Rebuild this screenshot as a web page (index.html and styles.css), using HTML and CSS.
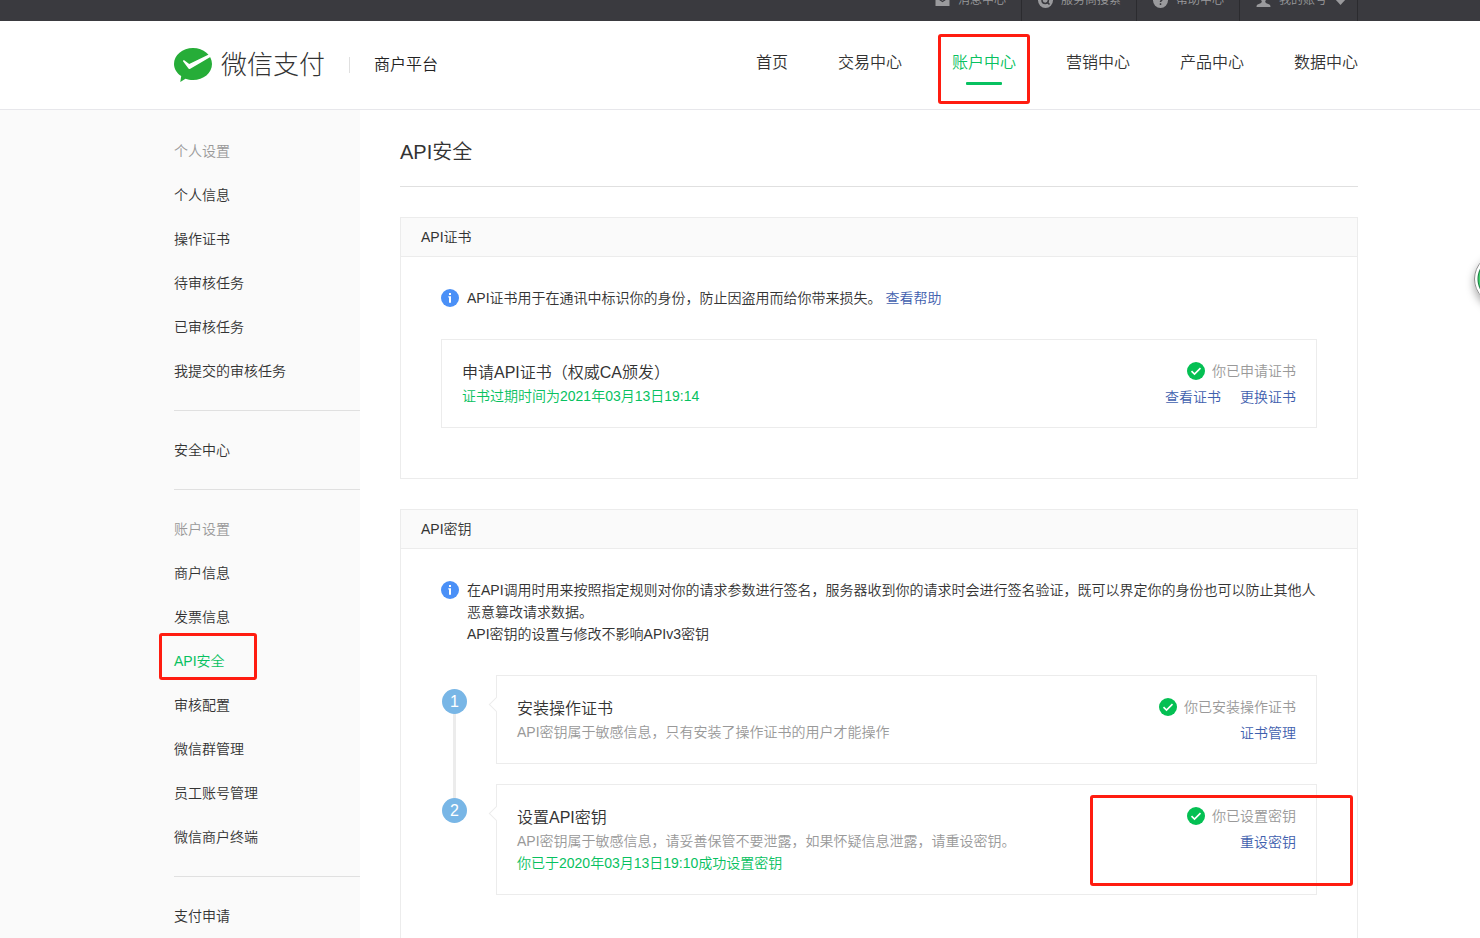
FILE: index.html
```html
<!DOCTYPE html>
<html lang="zh-CN">
<head>
<meta charset="utf-8">
<meta name="viewport" content="width=device-width, initial-scale=1">
<title>API安全 - 微信支付商户平台</title>
<link rel="stylesheet" href="styles.css">
</head>
<body>
<svg class="defs" aria-hidden="true">
  <symbol id="i-info" viewBox="0 0 18 18"><circle cx="9" cy="9" r="9" fill="#4a90f7"/><path d="M8 4h2v2H8zM7.300 7.200H10V13.800H8V8.400h-.7z" fill="#fff"/></symbol>
  <symbol id="i-ok" viewBox="0 0 18 18"><circle cx="9" cy="9" r="9" fill="#04c053"/><path d="M4.500 9.200l3 2.900 6-6" fill="none" stroke="#fff" stroke-width="1.600"/></symbol>
</svg>

<div class="topbar">
  <a class="top-item" href="#"><svg class="top-icon" viewBox="0 0 15 15"><path d="M.5 2h14v11H.5z" fill="#9a9a9d"/><path d="M3 5.500l4.500 3 4.500-3" fill="none" stroke="#3a3a3f" stroke-width="1.200"/></svg>消息中心</a>
  <a class="top-item" href="#"><svg class="top-icon" viewBox="0 0 15 15"><circle cx="7.500" cy="7.500" r="7.500" fill="#9a9a9d"/><circle cx="7.200" cy="7.200" r="3.200" fill="none" stroke="#3a3a3f" stroke-width="1.500"/><path d="M9 9l2.500 2.500" stroke="#3a3a3f" stroke-width="1.600"/></svg>服务商搜索</a>
  <a class="top-item" href="#"><svg class="top-icon" viewBox="0 0 15 15"><circle cx="7.500" cy="7.500" r="7.500" fill="#9a9a9d"/><path d="M5.300 5.600c.2-3 4.600-2.600 4.400.1-.1 1.400-2.200 1.500-2.200 3.400M7.500 10.300v1.700" fill="none" stroke="#3a3a3f" stroke-width="1.500"/></svg>帮助中心</a>
  <a class="top-item top-account" href="#"><svg class="top-icon" viewBox="0 0 15 15"><path d="M7.500 0a3.500 4 0 0 1 3.500 4c0 2-1 3.300-1.800 4 0 2 1.200 2.300 3 2.900 1.800.6 2.300 1.200 2.300 3.100H.5c0-1.900.5-2.500 2.300-3.100 1.800-.6 3-.9 3-2.900C5 7.300 4 6 4 4a3.500 4 0 0 1 3.500-4z" fill="#9a9a9d"/></svg>我的账号<svg class="top-caret" viewBox="0 0 11 6"><path d="M0 0h11L5.500 6z" fill="#9a9a9d"/></svg></a>
</div>

<header class="header">
  <a class="brand" href="#">
    <svg class="brand-icon" viewBox="0 0 38 34" aria-hidden="true"><path d="M19 0c10.500 0 19 7 19 16s-8.500 16-19 16c-2.700 0-5.200-.5-7.500-1.300L6.300 34l.9-5.900C2.800 25.200 0 20.900 0 16 0 7 8.500 0 19 0z" fill="#26ad38"/><path d="M10.200 12.300l5 3.800L35.300 6.200l1.900 2.300L16.300 20.700q-1.400.8-2.200-.7L9 13.200q-.2-1.500 1.200-.9z" fill="#fff"/></svg>
    <span class="brand-name">微信支付</span>
    <span class="brand-sub">商户平台</span>
  </a>
  <nav class="nav">
    <a href="#">首页</a>
    <a href="#">交易中心</a>
    <a class="active" href="#">账户中心<span class="mark mark-nav"></span></a>
    <a href="#">营销中心</a>
    <a href="#">产品中心</a>
    <a href="#">数据中心</a>
  </nav>
</header>

<div class="layout">
  <aside class="sidebar">
    <nav class="side-group">
      <h2>个人设置</h2>
      <a href="#">个人信息</a>
      <a href="#">操作证书</a>
      <a href="#">待审核任务</a>
      <a href="#">已审核任务</a>
      <a href="#">我提交的审核任务</a>
    </nav>
    <nav class="side-group">
      <a href="#">安全中心</a>
    </nav>
    <nav class="side-group">
      <h2>账户设置</h2>
      <a href="#">商户信息</a>
      <a href="#">发票信息</a>
      <a class="active" href="#">API安全<span class="mark mark-side"></span></a>
      <a href="#">审核配置</a>
      <a href="#">微信群管理</a>
      <a href="#">员工账号管理</a>
      <a href="#">微信商户终端</a>
    </nav>
    <nav class="side-group">
      <a href="#">支付申请</a>
    </nav>
  </aside>

  <main class="main">
    <h1>API安全</h1>

    <section class="panel">
      <h2 class="panel-head">API证书</h2>
      <div class="panel-body">
        <div class="info">
          <svg class="icon"><use href="#i-info"/></svg>
          <p>API证书用于在通讯中标识你的身份，防止因盗用而给你带来损失。 <a class="link" href="#">查看帮助</a></p>
        </div>
        <div class="card">
          <div class="card-text">
            <h3>申请API证书（权威CA颁发）</h3>
            <p class="green">证书过期时间为2021年03月13日19:14</p>
          </div>
          <div class="card-side">
            <p class="status"><svg class="icon"><use href="#i-ok"/></svg>你已申请证书</p>
            <div class="actions"><a class="link" href="#">查看证书</a><a class="link" href="#">更换证书</a></div>
          </div>
        </div>
      </div>
    </section>

    <section class="panel">
      <h2 class="panel-head">API密钥</h2>
      <div class="panel-body">
        <div class="info">
          <svg class="icon"><use href="#i-info"/></svg>
          <p>在API调用时用来按照指定规则对你的请求参数进行签名，服务器收到你的请求时会进行签名验证，既可以界定你的身份也可以防止其他人恶意篡改请求数据。<br>API密钥的设置与修改不影响APIv3密钥</p>
        </div>
        <ol class="steps">
          <li class="step">
            <div class="step-rail"><span class="step-num">1</span></div>
            <div class="card step-card">
              <div class="card-text">
                <h3>安装操作证书</h3>
                <p>API密钥属于敏感信息，只有安装了操作证书的用户才能操作</p>
              </div>
              <div class="card-side">
                <p class="status"><svg class="icon"><use href="#i-ok"/></svg>你已安装操作证书</p>
                <div class="actions"><a class="link" href="#">证书管理</a></div>
              </div>
            </div>
          </li>
          <li class="step">
            <div class="step-rail"><span class="step-num">2</span></div>
            <div class="card step-card">
              <div class="card-text">
                <h3>设置API密钥</h3>
                <p>API密钥属于敏感信息，请妥善保管不要泄露，如果怀疑信息泄露，请重设密钥。</p>
                <p class="green">你已于2020年03月13日19:10成功设置密钥</p>
              </div>
              <div class="card-side">
                <p class="status"><svg class="icon"><use href="#i-ok"/></svg>你已设置密钥</p>
                <div class="actions"><a class="link" href="#">重设密钥</a></div>
              </div>
              <span class="mark mark-card"></span>
            </div>
          </li>
        </ol>
      </div>
    </section>
  </main>
</div>

<button class="float-ball" type="button" aria-label="助手"></button>
</body>
</html>
```

FILE: styles.css
```css
* { box-sizing: border-box; }
body {
  margin: 0;
  height: 100vh;
  overflow: hidden;
  background: #fff;
  color: #333;
  font: 14px/22px "Liberation Sans", "Noto Sans CJK SC", sans-serif;
  font-weight: 350;
}
h1, h2, h3, p, ol { margin: 0; padding: 0; font-weight: inherit; }
a { color: inherit; text-decoration: none; }
.defs { display: none; }
.icon { display: block; flex: none; width: 18px; height: 18px; }
.link { color: #3f60ae; }
.green { color: #07c160; }

/* top bar, scrolled half out of view */
.topbar {
  display: flex;
  justify-content: flex-end;
  height: 42px;
  margin-top: -21px;
  padding-right: 122px;
  background: #3a3a3f;
  color: #9a9a9d;
  font-size: 12px;
}
.top-item {
  display: flex;
  align-items: center;
  gap: 8px;
  padding: 0 15px 0 16px;
  border-right: 1px solid #2b2b2f;
}
.top-account { padding-right: 11px; }
.top-icon { width: 15px; height: 15px; }
.top-caret { width: 11px; height: 6px; margin-top: 4px; }

.header {
  display: flex;
  justify-content: space-between;
  align-items: center;
  height: 89px;
  padding: 0 122px 0 174px;
  border-bottom: 1px solid #e7e7eb;
}
.brand { display: flex; align-items: center; }
.brand-icon { width: 38px; height: 34px; }
.brand-name { margin: 0 24px 0 9px; font-size: 26px; font-weight: 300; line-height: 40px; color: #333; }
.brand-sub {
  padding-left: 24px;
  border-left: 1px solid #e0e0e0;
  font-size: 16px;
  line-height: 16px;
  color: #222;
}
.nav { display: flex; gap: 50px; font-size: 16px; line-height: 40px; padding-bottom: 4px; }
.nav a { position: relative; }
.nav .active { color: #07c160; }
.nav .active::after {
  content: "";
  position: absolute;
  left: 14px;
  right: 14px;
  bottom: -2px;
  height: 3px;
  border-radius: 1px;
  background: #07c160;
}

.mark {
  position: absolute;
  border: 3px solid #ff1c10;
  border-radius: 3px;
  pointer-events: none;
}
.mark-nav { inset: -9px -14px -21px; }
.mark-side { left: -15px; top: -6px; width: 98px; height: 47px; }
.mark-card { top: 10px; right: -37px; width: 263px; height: 91px; }

.layout { display: flex; }
.sidebar { flex: none; width: 360px; padding: 19px 0 17px 174px; background: #fafafa; }
.side-group h2, .side-group a { display: block; font-size: 14px; line-height: 44px; }
.side-group h2 { color: #999; }
.side-group a { position: relative; }
.side-group .active { color: #07c160; }
.side-group + .side-group { margin-top: 17px; padding-top: 17px; border-top: 1px solid #e0e0e0; }

.main { flex: 1; min-width: 0; padding: 20px 122px 30px 40px; }
h1 { padding-bottom: 12px; border-bottom: 1px solid #e0e0e0; font-size: 20px; line-height: 44px; }
.panel { margin-top: 30px; border: 1px solid #ececec; }
.panel-head {
  padding: 0 20px;
  border-bottom: 1px solid #ececec;
  background: #fafafa;
  font-size: 14px;
  line-height: 38px;
}
.panel-body { padding: 30px 40px 50px; }
.info { display: flex; gap: 8px; margin-bottom: 30px; }
.info .icon { margin-top: 2px; }

.card {
  position: relative;
  display: flex;
  justify-content: space-between;
  align-items: flex-start;
  padding: 20px;
  border: 1px solid #ececec;
}
.card h3 { font-size: 16px; line-height: 25px; }
.card-text p { color: #999; }
.card-text .green { color: #07c160; }
.status { display: flex; justify-content: flex-end; align-items: center; gap: 7px; color: #999; }
.actions { display: flex; justify-content: flex-end; gap: 19px; margin-top: 5px; line-height: 20px; }

.steps { list-style: none; }
.step { display: flex; }
.step + .step { margin-top: 20px; }
.step-rail { position: relative; flex: none; width: 55px; padding: 14px 0 0 1px; }
.step:not(:last-child) .step-rail::before {
  content: "";
  position: absolute;
  left: 12px;
  top: 30px;
  bottom: -40px;
  width: 3px;
  background: #ececec;
}
.step-num {
  position: relative;
  display: block;
  width: 25px;
  border-radius: 50%;
  background: #78b6e6;
  color: #fff;
  font-size: 16px;
  line-height: 25px;
  text-align: center;
}
.step-card { flex: 1; }
.step-card::before {
  content: "";
  position: absolute;
  left: -6px;
  top: 23px;
  width: 10px;
  height: 10px;
  border: 1px solid #ececec;
  border-width: 0 0 1px 1px;
  background: #fff;
  transform: rotate(45deg);
}

.float-ball {
  position: fixed;
  top: 253px;
  right: -46px;
  width: 52px;
  height: 52px;
  border: 1px solid #8c8c8c;
  border-radius: 50%;
  background: radial-gradient(circle, #3fd06a 21px, #1f7a45 22px, #fff 23px);
  box-shadow: 0 4px 8px rgba(0, 0, 0, .35);
}
```
